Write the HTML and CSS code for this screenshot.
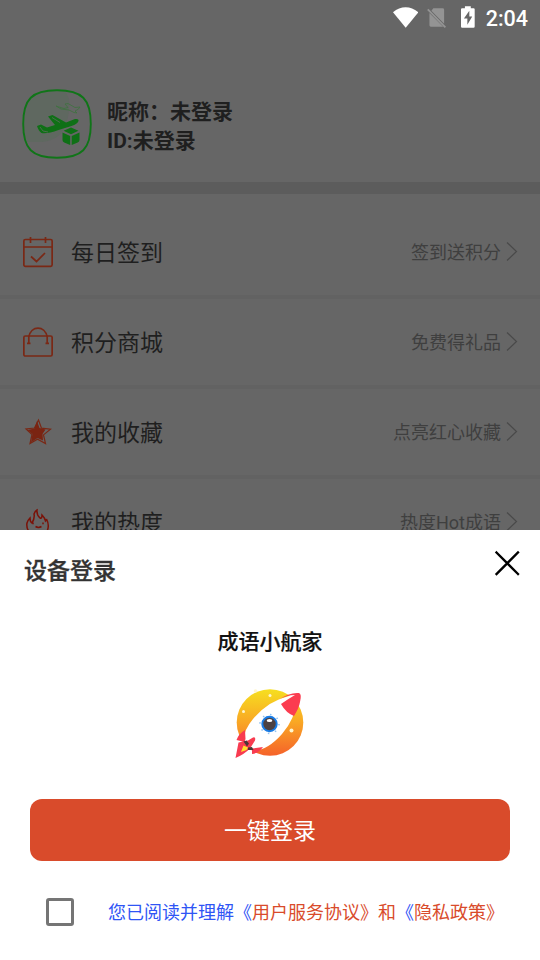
FILE: index.html
```html
<!DOCTYPE html>
<html lang="zh-CN">
<head>
<meta charset="utf-8">
<title>设备登录</title>
<link rel="stylesheet" href="styles.css">
</head>
<body>
<div class="screen">
  <main class="page">
    <header class="status">
      <svg class="wifi" width="26" height="22" viewBox="0 0 26 22"><path d="M0 5.2C7.8-1.700 18.2-1.700 26 5.2L13 21z" fill="#fff"/></svg>
      <svg class="sim" width="20" height="22" viewBox="0 0 20 22"><path d="M6.500 1H16q1.500 0 1.500 1.500V17L4.500 3.500zM2.500 6 16.500 20H4q-1.500 0-1.500-1.500z" fill="#949494"/><path d="m.8 2.200 18 18.300" stroke="#949494" stroke-width="1.800"/></svg>
      <svg class="battery" width="14" height="22" viewBox="0 0 14 22"><path d="M4 0h6v2h2.800q1.200 0 1.200 1.200v17.600q0 1.200-1.200 1.200H1.200Q0 22 0 20.800V3.200Q0 2 1.200 2H4z" fill="#fff"/><path d="M8.500 4.500 3 12.500h3.500v6.500l5-8.500H8.500z" fill="#666"/></svg>
      <span class="clock">2:04</span>
    </header>
    <section class="profile">
      <svg class="avatar" width="70" height="70" viewBox="0 0 70 70">
        <path d="M2 35V24Q4 3 24 3h20l3 7q1 15-3 24-4 17-24 19H4z" fill="#5f6860"/>
        <path d="M35 1.200C60 1.200 68.800 10 68.800 35S60 68.800 35 68.800 1.200 60 1.200 35 10 1.200 35 1.200Z" fill="none" stroke="#107518" stroke-width="1.900"/>
        <path d="m15 37 4-1.500 6 3 8-2.500-7-8.500 4.500-1.500 13.500 7.500 9-3.500q4-.5 3.500 2-1 3-7 5l-13 4q-11 4-17 3-3-2-4.500-7z" fill="#0f7016"/>
        <path d="m18 38 3 4 5 1M30 28.500l8 5" stroke="#5b6d5c" stroke-width=".8" fill="none"/>
        <path d="m34 17 3 1 5 1.500 4-1-3-3.500 3-.5 7 4 5-.5q-1 2.500-5 4l2 2-3-.5-5-2.500-8-1z" fill="none" stroke="#3d723f" stroke-width=".8"/>
        <path d="m49 38.500 7.500 3.200-7.500 3.600-7.500-3.600zM40.500 43.500l7.700 3.500v9l-6-2.500q-1.700-.7-1.700-2.500zM57.500 43.500 49.700 47v9l6-2.500q1.800-.7 1.800-2.500z" fill="#0f7016"/>
      </svg>
      <div class="names"><div>昵称：未登录</div><div>ID:未登录</div></div>
    </section>
    <nav class="menu">
      <div class="row">
        <svg class="icon" width="30" height="32" viewBox="0 0 30 32" fill="none" stroke="#7a2815" stroke-width="1.700"><rect x=".85" y="3.500" width="28.300" height="26.800" rx="1.500"/><path d="M1 11h28M7.500 1v6M22.500 1v6M8 20.500l5.500 5 8.500-8.500"/></svg>
        <span class="label">每日签到</span><span class="hint">签到送积分</span>
        <svg class="arrow" width="12" height="20" viewBox="0 0 12 20"><path d="m1 .5 9.500 9L1 18.500"/></svg>
      </div>
      <div class="row">
        <svg class="icon" width="30" height="32" viewBox="0 0 30 32" fill="none" stroke="#7a2815" stroke-width="1.700"><rect x=".85" y="10" width="28.300" height="20" rx="1.500"/><path d="M4 17.300h3.500M22.500 17.300H26M5.800 17v-6C8-.8 22-.8 24.200 11v6"/></svg>
        <span class="label">积分商城</span><span class="hint">免费得礼品</span>
        <svg class="arrow" width="12" height="20" viewBox="0 0 12 20"><path d="m1 .5 9.500 9L1 18.500"/></svg>
      </div>
      <div class="row">
        <svg class="icon" width="30" height="32" viewBox="0 0 30 32"><path d="m15.500 4 3 8.200 9 1-7 5.700 2 8.600-8-4.300-7.500 4.300 2-9-6-5.500 8.500-1z" fill="none" stroke="#7a2815" stroke-width="1.200"/><path d="M14 5 16.500 12l6 1.500-3 4.500.5 6.500-5.500-2.500L8 26.500l1.500-8.500-5-4 7-1.500z" fill="#7a2412"/></svg>
        <span class="label">我的收藏</span><span class="hint">点亮红心收藏</span>
        <svg class="arrow" width="12" height="20" viewBox="0 0 12 20"><path d="m1 .5 9.500 9L1 18.500"/></svg>
      </div>
      <div class="row">
        <svg class="icon" width="30" height="32" viewBox="0 0 30 32" fill="none" stroke="#7a1208" stroke-width="1.500"><path d="M7 27Q3 22 4 17q1-3 3-5 0 4 2 5 3-5 2-9 1-3 3-4-.5 5 3 8 2 1 2-3 3 3 3.500 6 1-1 1-2 3 6 1 11-2 5-9 5-6 0-8.500-2Z"/><path d="M10 16.500v1.800M20 16.500v1.800M12.500 20.500q3 1.800 6 0"/></svg>
        <span class="label">我的热度</span><span class="hint">热度Hot成语</span>
        <svg class="arrow" width="12" height="20" viewBox="0 0 12 20"><path d="m1 .5 9.500 9L1 18.500"/></svg>
      </div>
    </nav>
  </main>
  <section class="sheet">
    <div class="sheet-head">
      <h2>设备登录</h2>
      <svg class="close" width="26" height="26" viewBox="0 0 26 26"><path d="m2.500 2.500 21.500 21.500M24 2.500 2.500 24" stroke="#000" stroke-width="2.300" stroke-linecap="square"/></svg>
    </div>
    <h3>成语小航家</h3>
    <svg class="rocket" width="72" height="72" viewBox="0 0 72 72">
      <defs><linearGradient id="sun" x1="0" y1="0" x2="0" y2="1"><stop offset="0" stop-color="#f6df20"/><stop offset=".5" stop-color="#f9a624"/><stop offset="1" stop-color="#f5622a"/></linearGradient></defs>
      <circle cx="36" cy="34.500" r="33.300" fill="url(#sun)"/>
      <g fill="#fff6cf"><circle cx="36" cy="7.500" r="1.500"/><circle cx="9.500" cy="23.500" r="1.500"/><circle cx="57.500" cy="42.500" r="2"/><circle cx="21.500" cy="3" r="1.800"/></g>
      <path d="M10 56Q8 44 19 31 34 13 55 8 63 7 63 12 61 31 48 46 32 64 18 62z" fill="#fff"/>
      <path d="M44 12Q56 4 65 5q3 1 1 9-1 6-6 14-8-3-13-12 7-5 14-9-8 0-17 5z" fill="#fb3c50"/>
      <path d="m11 42 .5 9-1 3-8-2q2-6 8.500-10zM18 60.500l11-1.500q-4 6-11 7zM1.500 70l3-15.500 9.500-2 5-3q3-1 2 3l-5 8q-6 6-14.500 9.500z" fill="#f83b50"/>
      <path d="m7 64 2.500-6.500 4.500 2-1.500 2.500z" fill="#ffe02c"/>
      <path d="m9.500 53.500 3-1 2.500 3-2 3zM14 59.500l4-.5 1.500 3H14z" fill="#4b3836"/>
      <circle cx="35.500" cy="36" r="9.500" fill="none" stroke="#8fc1f0" stroke-width="1.500" stroke-dasharray="1.500 6"/><circle cx="35.500" cy="36" r="7.200" fill="#4b4143" stroke="#197be4" stroke-width="2"/>
      <ellipse cx="35.500" cy="32.500" rx="2.800" ry="1.600" fill="#fff"/>
    </svg>
    <button class="login" type="button"><span>一键登录</span></button>
    <div class="agree"><span class="box"></span><p>您已阅读并理解《<a>用户服务协议》和</a>《<a>隐私政策》</a></p></div>
  </section>
</div>
</body>
</html>
```
FILE: styles.css
```css
* { box-sizing: border-box; }
body { margin: 0; font-family: Roboto, "Noto Sans CJK SC", sans-serif; }
.screen { width: 540px; height: 960px; display: flex; flex-direction: column; overflow: hidden; background: #fff; }
.page { height: 530px; flex: none; overflow: hidden; background: #666; }
.status { height: 36px; padding: 0 12px 0 393px; display: flex; align-items: center; color: #fff; }
.wifi { margin-right: 9px; }
.sim { margin-right: 13px; }
.battery { margin-right: 11px; margin-left: 1px; margin-top: -2px; }
.clock { padding-top: 2px; font-size: 21.5px; line-height: 36px; font-weight: 500; white-space: nowrap; }
.profile { height: 158px; padding: 53px 22px 0 22px; display: flex; gap: 15px; border-bottom: 12px solid #5c5c5c; }
.avatar { flex: none; }
.names { padding-top: 9px; font-size: 21px; line-height: 29px; font-weight: 700; color: #1f1f1f; }
.menu { padding-top: 15px; }
.row { height: 90px; padding: 0 22px 0 23px; display: flex; align-items: center; border-bottom: 4px solid #626262; }
.icon { flex: none; margin-right: 18px; }
.label { padding-top: 4px; font-size: 23px; line-height: 34px; color: #1f1f1f; }
.hint { margin-left: auto; padding-top: 2px; font-size: 18px; line-height: 26px; color: #3f3f3f; }
.arrow { margin-left: 5px; fill: none; stroke: #4a4a4a; stroke-width: 1.2; }
.sheet { height: 430px; flex: none; display: flex; flex-direction: column; align-items: center; background: #fff; }
.sheet-head { width: 100%; height: 80px; padding: 20px 20px 0 24px; display: flex; justify-content: space-between; align-items: flex-start; }
h2, h3, p { margin: 0; }
h2 { padding-top: 2px; font-size: 23px; line-height: 40px; font-weight: 500; color: #333; -webkit-text-stroke: .3px #333; }
h3 { margin-top: 17px; font-size: 21px; line-height: 30px; font-weight: 500; color: #111; -webkit-text-stroke: .2px #111; }
.rocket { margin-top: 31px; }
.login { width: 480px; height: 62px; margin-top: 39px; padding: 4px 0 0; border: 0; border-radius: 12px; background: #d94b2b; color: #fff; font-family: inherit; font-size: 23px; line-height: 58px; }
.agree { width: 100%; margin-top: 36px; padding-left: 46px; display: flex; align-items: center; }
.box { width: 28px; height: 28px; margin-right: 34px; border: 3px solid #757575; border-radius: 3px; }
.agree p { padding-top: 2px; font-size: 18px; line-height: 28px; color: #2f55f5; white-space: nowrap; }
.agree a { color: #d94b2b; }
```
